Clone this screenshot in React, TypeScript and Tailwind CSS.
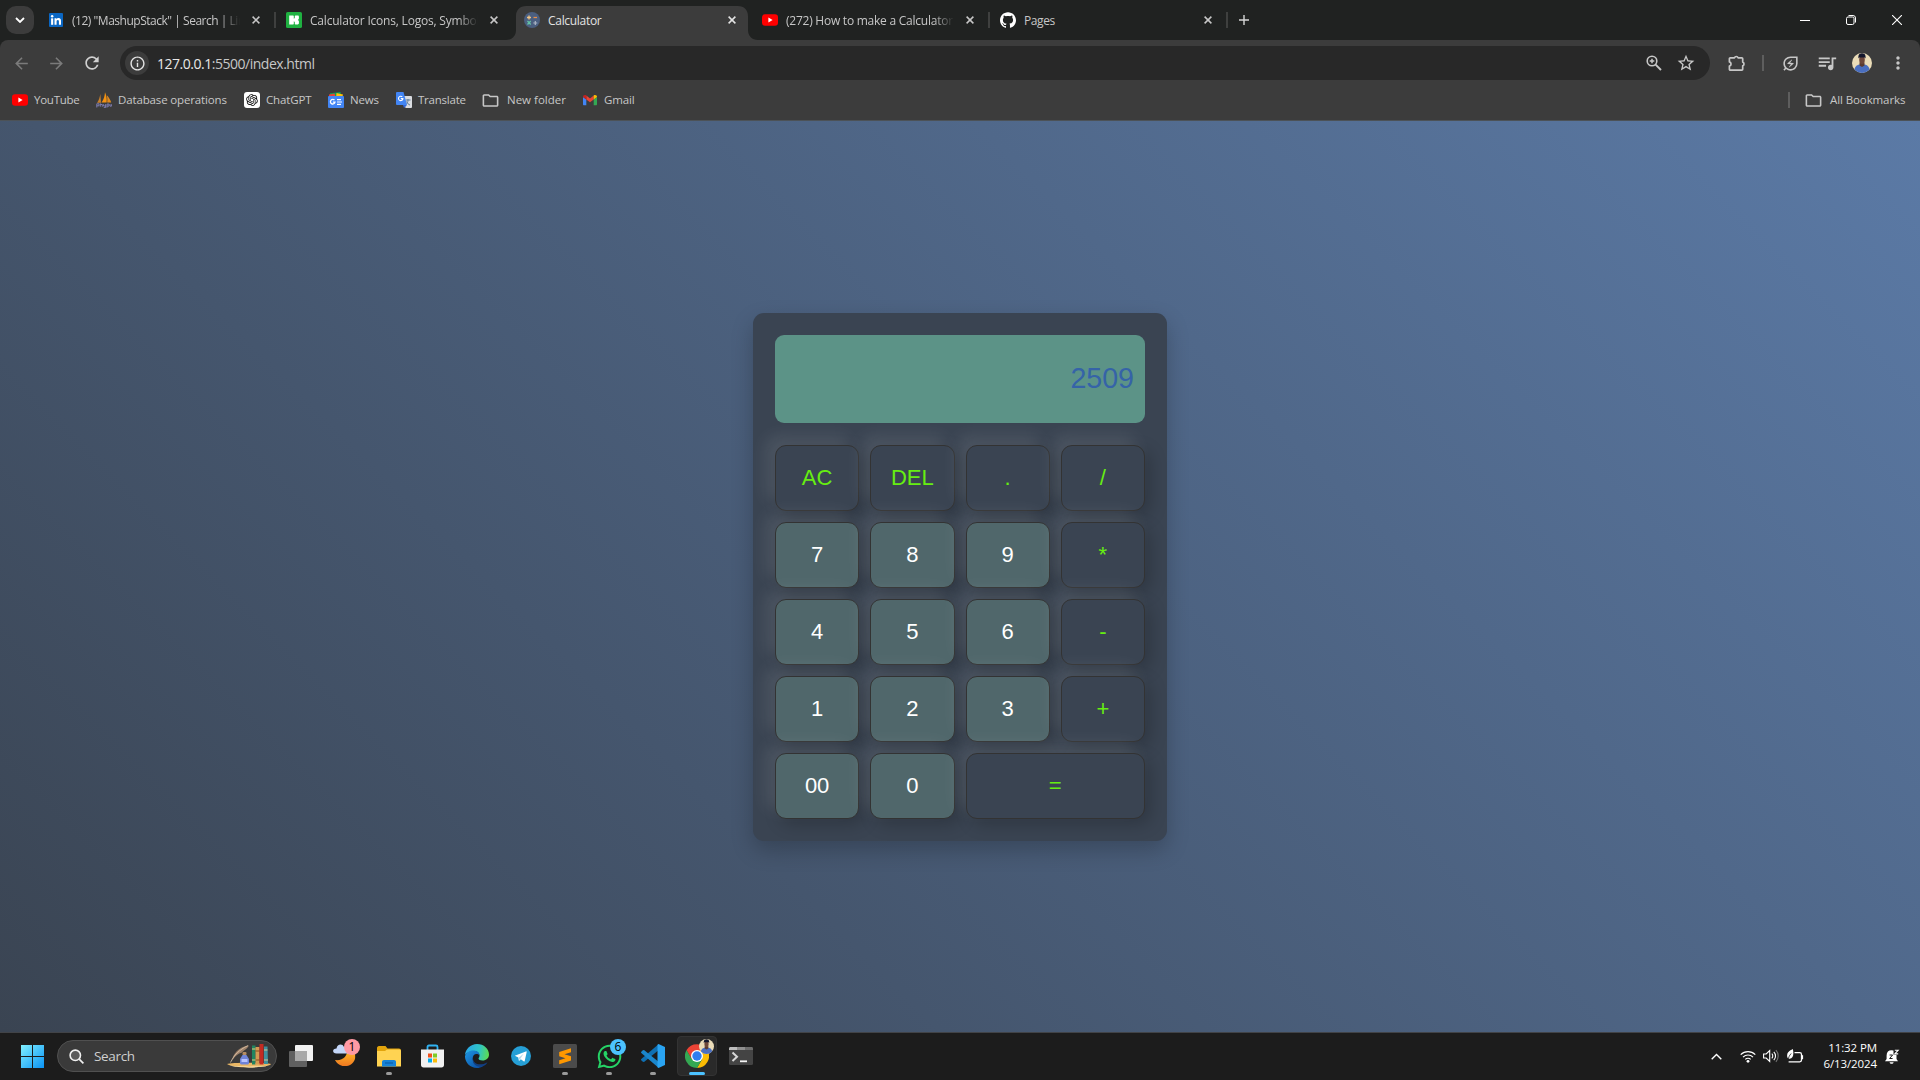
import React from "react";
import { SiGithub } from "react-icons/si";
import { RiOpenaiFill } from "react-icons/ri";
import { FaWhatsapp } from "react-icons/fa";
import {
  MdArrowBack,
  MdArrowForward,
  MdRefresh,
  MdStarBorder,
  MdOutlineEnergySavingsLeaf,
  MdQueueMusic,
  MdMoreVert,
  MdOutlineFolder,
  MdOutlineInfo,
} from "react-icons/md";

const Svg = ({ w = 16, h, vb, children }: { w?: number; h?: number; vb: string; children: React.ReactNode }) => (
  <svg width={w} height={h ?? w} viewBox={vb} fill="none" className="block shrink-0">
    {children}
  </svg>
);

const YouTube = () => (
  <Svg vb="0 0 16 16">
    <rect x="0" y="2.3" width="16" height="11.4" rx="3" fill="#f00" />
    <path d="M6.4 5.6v4.8L10.6 8z" fill="#fff" />
  </Svg>
);

const LinkedIn = () => (
  <Svg vb="0 0 16 16">
    <rect x="1" y="1" width="14" height="14" rx="1" fill="#0a66c2" />
    <rect x="3.1" y="6.3" width="2.1" height="6.5" fill="#fff" />
    <circle cx="4.15" cy="4.2" r="1.25" fill="#fff" />
    <path d="M6.5 6.3h2v.9c.4-.7 1.2-1.1 2-1.1 2 0 2.5 1.300 2.500 3.100v3.600h-2.100V9.600c0-.9-.1-1.700-1.100-1.700S8.600 8.700 8.600 9.600v3.200H6.500z" fill="#fff" />
  </Svg>
);

const Icons8 = () => (
  <Svg vb="0 0 16 16">
    <rect width="16" height="16" rx="1.600" fill="#1fb141" />
    <path d="M3.200 3.500h3.900c.4 0 .7.300.7.700v2.600l1-.8V4.200c0-.4.300-.7.700-.7h2.200c.8 0 1.200.5 1.200 1.200v1.600c0 .9-.6 1.400-1.200 1.600.7.200 1.200.8 1.200 1.700v1.700c0 .7-.5 1.200-1.200 1.200H9.500c-.4 0-.7-.3-.7-.7v-1.700l-1-.8v2.500c0 .4-.3.700-.7.700H3.200z" fill="#fff" />
  </Svg>
);

const CalcFavicon = () => (
  <Svg vb="0 0 16 16">
    <circle cx="8" cy="8" r="8" fill="#4b5f80" />
    <path d="M3 5.500h4M5 3.500v4" stroke="#f3c583" strokeWidth="1.300" />
    <path d="M9.500 5.500h3.500" stroke="#e88f4a" strokeWidth="1.300" />
    <path d="M3.500 9l3.200 3.500M6.700 9l-3.200 3.500" stroke="#63c3a5" strokeWidth="1.300" />
    <path d="M9.300 11h4M11.300 9v4" stroke="#aab4c4" strokeWidth="1.200" />
  </Svg>
);

const DbIcon = () => (
  <Svg vb="0 0 16 16">
    <path d="M1 10.800C2.800 8.500 3.900 5 4.300 2L5 10.800z" fill="#c9802c" />
    <path d="M5.500 10.500C7.700 8 8.800 4 9 .3c1.500 3 2 7 1.600 10.300z" fill="#f29111" />
    <path d="M11.200 10.500c.4-3 0-5.500-.4-7.200 2 2 3.700 4.700 4.400 7.200z" fill="#e08a1e" />
    <path d="M.8 15.500v-3.700h2.200v2H.8M4.300 11.300v3.400M4.300 12.500h2v2.200M7.600 12.200v1.800h2v-1.800M9.600 14v1.600H7.800M11 15.600v-3.500h2v2h-2M14 12.200v2h1.400v-2" stroke="#7f7fb5" strokeWidth=".95" />
  </Svg>
);

const ChatGpt = () => (
  <div className="flex size-4 shrink-0 items-center justify-center rounded-[3px] bg-white text-black">
    <RiOpenaiFill size={14} />
  </div>
);

const News = () => (
  <Svg vb="0 0 16 16">
    <path d="M2 1.200L12.500 0l1 5H2z" fill="#0c9d58" />
    <path d="M8.500 1l6.500 1.500-1 4H8z" fill="#ffc107" />
    <path d="M1 2.500l5.500-1L8 6H1z" fill="#ea4335" />
    <rect y="4" width="16" height="12" rx="1" fill="#4285f4" />
    <path d="M6.500 8.200a2.300 2.300 0 1 0 .5 2H4.900" stroke="#fff" strokeWidth="1.300" />
    <path d="M9 7.700h4M9 10h5M9 12.300h4" stroke="#fff" strokeWidth="1.200" />
  </Svg>
);

const Translate = () => (
  <Svg vb="0 0 16 16">
    <path d="M7 4h8a1 1 0 0 1 1 1v10a1 1 0 0 1-1 1H9.500z" fill="#dadce0" />
    <path d="M9.500 8h5M12 7v1c0 2-1 3.500-2 4.500M10.500 9.500c1 2 2 3 3.500 3.500" stroke="#5f7d9c" />
    <path d="M1 0h6.500L11 13H1a1 1 0 0 1-1-1V1a1 1 0 0 1 1-1z" fill="#4285f4" />
    <path d="M8 16l3-3H7z" fill="#3367d6" />
    <path d="M6.300 4.900a2.200 2.200 0 1 0 .6 1.700H4.800" stroke="#fff" strokeWidth="1.100" />
  </Svg>
);

const Gmail = () => (
  <Svg vb="0 0 16 16">
    <path d="M1 5v7.200c0 .7.400 1.100 1 1.100h2.300V7.400z" fill="#4285f4" />
    <path d="M15 5v7.200c0 .7-.4 1.100-1 1.100h-2.300V7.400z" fill="#34a853" />
    <path d="M4.300 3.600v3.900L8 10.300l3.700-2.800V3.600L8 6.400z" fill="#ea4335" />
    <path d="M1 5.100C1 3.200 3 2.600 4.300 3.600v3.900L1 5.100z" fill="#c5221f" />
    <path d="M15 5.100c0-1.900-2-2.500-3.300-1.500v3.900L15 5.100z" fill="#fbbc04" />
  </Svg>
);

const CloseX = () => (
  <Svg w={8} vb="0 0 8 8">
    <path d="M.6.6l6.800 6.800M7.400.6L.6 7.400" stroke="currentColor" strokeWidth="1.500" />
  </Svg>
);

const tabs = [
  { icon: <LinkedIn />, title: '(12) "MashupStack" | Search | Lin', fade: true, sep: false, active: false, ls: "tracking-[-0.48px]" },
  { icon: <Icons8 />, title: "Calculator Icons, Logos, Symbol", fade: true, sep: true, active: false, ls: "tracking-[-0.2px]" },
  { icon: <CalcFavicon />, title: "Calculator", fade: false, sep: false, active: true, ls: "tracking-[-0.3px]" },
  { icon: <YouTube />, title: "(272) How to make a Calculator", fade: true, sep: false, active: false, ls: "tracking-[-0.24px]" },
  { icon: <SiGithub size={16} color="#fff" />, title: "Pages", fade: false, sep: true, active: false, ls: "tracking-[-0.4px]" },
];

const TabStrip = () => (
  <div className="flex h-10 bg-[#202221] text-[#c7c7c7]">
    <div className="mt-1.5 ml-1.5 flex size-7 items-center justify-center rounded-[10px] bg-[#3c3c3c] text-white">
      <Svg w={10} h={6} vb="0 0 10 6">
        <path d="M1 1l4 4 4-4" stroke="currentColor" strokeWidth="1.800" />
      </Svg>
    </div>
    <div className="ml-1.5 flex">
      {tabs.map((t) => (
        <div key={t.title} className="relative h-10 w-[238px]">
          {t.sep && <div className="absolute top-3 -left-1 h-4 w-0.5 bg-[#3f403f]" />}
          {t.active && (
            <svg className="absolute -left-3 top-1.5" width="256" height="34" viewBox="0 0 256 34">
              <path d="M0 34h2c6 0 10-4 10-10V10C12 4 16 0 22 0h212c6 0 10 4 10 10v14c0 6 4 10 10 10h2z" fill="#3c3c3c" />
            </svg>
          )}
          <div className={`relative flex h-10 items-center pl-2 ${t.active ? "text-[#e3e3e3]" : ""}`}>
            {t.icon}
            <div
              className={`ml-2 w-[168px] pt-[2px] text-[12px] whitespace-nowrap ${t.ls} ${
                t.fade ? "[mask-image:linear-gradient(to_right,#000_88%,transparent)]" : ""
              }`}
            >
              {t.title}
            </div>
            <div className="ml-3">
              <CloseX />
            </div>
          </div>
        </div>
      ))}
      <div className="relative flex h-10 w-8 items-center pl-[9px]">
        <div className="absolute top-3 -left-1 h-4 w-0.5 bg-[#3f403f]" />
        <Svg w={10} vb="0 0 10 10">
          <path d="M5 0v10M0 5h10" stroke="#d6d6d6" strokeWidth="1.400" />
        </Svg>
      </div>
    </div>
    <div className="ml-auto flex items-center pr-[18px] text-white">
      <div className="h-px w-2.5 bg-white" />
      <div className="ml-9">
        <Svg w={10} vb="0 0 10 10">
          <rect x=".5" y="2" width="7.500" height="7.500" rx="1.500" stroke="currentColor" />
          <path d="M2.500.5H7A2.500 2.500 0 0 1 9.500 3v4.500" stroke="currentColor" />
        </Svg>
      </div>
      <div className="ml-9">
        <Svg w={10} vb="0 0 10 10">
          <path d="M0 0l10 10M10 0L0 10" stroke="currentColor" strokeWidth="1.100" />
        </Svg>
      </div>
    </div>
  </div>
);

const Avatar = ({ size }: { size: number }) => (
  <svg width={size} height={size} viewBox="0 0 20 20" className="block shrink-0 rounded-full">
    <rect width="20" height="20" fill="#eadcb8" />
    <path d="M2 20c0-6 2.500-8 5.500-8.500h5c3.500.5 5.500 3 5.500 8.500z" fill="#4a6fc0" />
    <path d="M7.500 9.500h5v3L10 14l-2.500-1.500z" fill="#5b3b31" />
    <ellipse cx="10" cy="6.800" rx="2.800" ry="4.200" fill="#6d473a" />
    <path d="M6.400 5.600C6 1 8 .3 10 .3s4 .7 3.600 5.300l-.7-1.200H7.100z" fill="#14172d" />
  </svg>
);

const ZoomGlyph = () => (
  <Svg w={16} vb="0 0 16 16">
    <circle cx="6" cy="6" r="4.800" stroke="currentColor" strokeWidth="1.600" />
    <path d="M9.600 9.600L15 15" stroke="currentColor" strokeWidth="1.900" />
    <path d="M6 3.700v4.600M3.700 6h4.600" stroke="currentColor" strokeWidth="1.500" />
  </Svg>
);

const PuzzleGlyph = () => (
  <Svg w={18} vb="0 0 18 18">
    <path
      d="M2.300 3.800h4.200a1.900 1.900 0 0 1 3.600 0h3.700a.9.900 0 0 1 .9.900v3.400a1.900 1.900 0 0 1 0 3.600v3.600a.9.900 0 0 1-.9.900H2.300a.9.900 0 0 1-.9-.9v-3.300a2.100 2.100 0 0 0 0-4.100V4.700a.9.900 0 0 1 .9-.9z"
      stroke="currentColor"
      strokeWidth="1.700"
      strokeLinejoin="round"
    />
  </Svg>
);

const Toolbar = () => (
  <div className="flex h-[46px] items-center pl-3 text-[#c7c7c7]">
    <div className="flex w-[108px] items-center gap-4">
      <MdArrowBack size={19} color="#7b7b7b" />
      <MdArrowForward size={19} color="#7b7b7b" />
      <MdRefresh size={20} color="#d0d0d0" />
    </div>
    <div className="flex h-[34px] w-[1590px] items-center rounded-full bg-[#282828] pl-[5px]">
      <div className="flex size-6 items-center justify-center rounded-full bg-[#3c3c3c] text-[#e3e3e3]">
        <MdOutlineInfo size={17} />
      </div>
      <div className="ml-[8px] text-[14px] tracking-[-0.48px] whitespace-nowrap">
        <span className="text-[#e8e8e8]">127.0.0.1</span>
        <span className="text-[#c7c7c7]">:5500/index.html</span>
      </div>
      <div className="ml-auto flex items-center gap-[14px] pr-3.5">
        <ZoomGlyph />
        <MdStarBorder size={20} />
      </div>
    </div>
    <div className="flex flex-1 items-center pl-[18px]">
      <PuzzleGlyph />
      <div className="ml-[16px] h-4 w-0.5 bg-[#5e5e5e]" />
      <MdOutlineEnergySavingsLeaf size={19} className="ml-[17px]" />
      <MdQueueMusic size={22} className="ml-4" />
      <div className="ml-[14px]">
        <Avatar size={20} />
      </div>
      <MdMoreVert size={20} className="ml-4" />
    </div>
  </div>
);

const bookmarks = [
  { icon: <YouTube />, label: "YouTube", w: "w-[84px]", ls: "tracking-[-0.25px]" },
  { icon: <DbIcon />, label: "Database operations", w: "w-[148px]", ls: "tracking-[-0.14px]" },
  { icon: <ChatGpt />, label: "ChatGPT", w: "w-[84px]", ls: "tracking-[-0.15px]" },
  { icon: <News />, label: "News", w: "w-[68px]", ls: "tracking-[-0.15px]" },
  { icon: <Translate />, label: "Translate", w: "w-[86px]", ls: "tracking-[-0.22px]" },
  { icon: <MdOutlineFolder size={19} className="-ml-px" />, label: "New folder", w: "w-[100px] gap-[7px]", ls: "tracking-[0px]" },
  { icon: <Gmail />, label: "Gmail", w: "w-[80px]", ls: "tracking-[-0.15px]" },
];

const Bookmarks = () => (
  <div className="flex h-[34px] items-center pb-[6px] pl-3 text-[11.5px] text-[#c7c7c7]">
    {bookmarks.map((b) => (
      <div key={b.label} className={`flex shrink-0 items-center gap-1.5 whitespace-nowrap ${b.w} ${b.ls}`}>
        {b.icon}
        {b.label}
      </div>
    ))}
    <div className="ml-auto h-4 w-0.5 bg-[#5e5e5e]" />
    <div className="ml-[14px] flex w-[116px] items-center gap-[7px] tracking-[-0.1px] whitespace-nowrap">
      <MdOutlineFolder size={19} />
      All Bookmarks
    </div>
  </div>
);

const keys: { k: string; op?: boolean; wide?: boolean }[] = [
  { k: "AC", op: true },
  { k: "DEL", op: true },
  { k: ".", op: true },
  { k: "/", op: true },
  { k: "7" },
  { k: "8" },
  { k: "9" },
  { k: "*", op: true },
  { k: "4" },
  { k: "5" },
  { k: "6" },
  { k: "-", op: true },
  { k: "1" },
  { k: "2" },
  { k: "3" },
  { k: "+", op: true },
  { k: "00" },
  { k: "0" },
  { k: "=", op: true, wide: true },
];

const Calculator = () => (
  <div className="w-[414px] rounded-[11px] bg-[#3a4452] p-[22px] font-['Liberation_Sans',sans-serif] shadow-[0_9px_22px_rgba(0,0,0,0.22)]">
    <div className="flex h-[88px] items-center justify-end rounded-[9px] bg-[#5c9387] pr-[11px] pb-[1px] text-[28.6px] text-[#3563a8]">
      2509
    </div>
    <div className="mt-[22px] grid grid-cols-4 gap-[11px]">
      {keys.map(({ k, op, wide }) => (
        <button
          key={k}
          className={`relative h-[66px] rounded-[11px] border border-[#333] pb-px text-[22px] shadow-[-8.8px_-8.8px_16.5px_rgba(255,255,255,0.1),5.5px_5.5px_16.5px_rgba(0,0,0,0.2)] ${
            op ? "bg-[#3a4452] text-[#66ee11]" : "bg-[#50676b] text-white"
          } ${wide ? "col-span-2" : ""}`}
        >
          {k}
        </button>
      ))}
    </div>
  </div>
);

const StartIcon = () => (
  <Svg w={23} vb="0 0 23 23">
    <defs>
      <linearGradient id="win" x1="0" y1="0" x2="23" y2="23" gradientUnits="userSpaceOnUse">
        <stop stopColor="#80f0ff" />
        <stop offset="1" stopColor="#0a93f5" />
      </linearGradient>
    </defs>
    <path d="M0 0h11v11H0zM12 0h11v11H12zM0 12h11v11H0zM12 12h11v11H12z" fill="url(#win)" />
  </Svg>
);

const SearchArt = () => (
  <Svg w={44} h={24} vb="0 0 44 24">
    <path d="M0 20c4-1.800 39-1.800 44 0-2 4-38 5-44 0z" fill="#eab765" />
    <path d="M3 21.500c8 1.500 30 1.500 38 0-6 2.500-32 2.500-38 0z" fill="#fff0c2" />
    <path d="M5 17C6 10 11 3 22 1.500c-2 4-6 5-7 7-3 1-6 2-10 8.500z" fill="#9d8068" />
    <path d="M3.500 18.500C7 11 12 6 21 1.500" stroke="#e8d2b8" strokeWidth=".7" />
    <rect x="15.500" y="8" width="4" height="3" rx="1" fill="#b58d63" />
    <path d="M15.500 11h4l2.500 4v4c0 1-1 1.500-2 1.500h-5c-1 0-2-.5-2-1.500v-4z" fill="#6f84d8" />
    <path d="M14.500 15h6v3h-6z" fill="#b7c3ff" />
    <rect x="25" y="1.500" width="3.500" height="19" fill="#218560" />
    <rect x="28.500" y="3" width="4" height="17.500" fill="#d49a52" />
    <path d="M28.500 7h4M28.500 16h4" stroke="#86501f" />
    <rect x="32.500" y="0" width="4" height="20.500" fill="#c32b22" />
    <path d="M37 2.500h3.500L41 20h-4z" fill="#408f9d" />
    <path d="M37 6h3.500M37 16h4" stroke="#d8c38d" />
    <path d="M25 5h3.500M25 16h3.500" stroke="#e3cf80" />
  </Svg>
);

const TaskView = () => (
  <Svg w={24} vb="0 0 24 24">
    <rect x="6" y="1" width="18" height="16" rx="1" fill="#f2f2f2" />
    <rect x="0" y="7" width="18" height="16" rx="1" fill="#606060" />
    <path d="M6 7h12v10H6z" fill="#a9a9a9" />
  </Svg>
);

const Weather = () => (
  <Svg w={24} vb="0 0 24 24">
    <defs>
      <linearGradient id="moon" x1="0" y1="8" x2="0" y2="23" gradientUnits="userSpaceOnUse">
        <stop stopColor="#ffb627" />
        <stop offset="1" stopColor="#ee7420" />
      </linearGradient>
    </defs>
    <path d="M2 16c8 1 13-4 12-11 7 0 9 5 8 10-2 6-7 7.500-11 7C7 22 4 19.500 2 16z" fill="url(#moon)" />
    <path d="M3.500 9.500c-4.500 0-4.500-5 0-5C4 0 9.500-1 11 3c3.500 0 5 3 4 6.500z" fill="#c3d6f8" />
  </Svg>
);

const Explorer = () => (
  <Svg w={24} vb="0 0 24 24">
    <path d="M0 4c0-1 .8-2 2-2h6.500l2 2.500H22c1 0 2 .8 2 2V12H0z" fill="#e2a40c" />
    <path d="M0 7h8l2-1.500h12.500c.8 0 1.500.7 1.500 1.500v15.500H0z" fill="#ffd352" />
    <path d="M5 22.500V18c0-1.200.8-2 2-2h10c1.200 0 2 .8 2 2v4.500z" fill="#1683d8" />
    <path d="M8 19h8" stroke="#0b5fa9" strokeWidth="1.200" />
  </Svg>
);

const Store = () => (
  <Svg w={24} vb="0 0 24 24">
    <path d="M6.500 6V3c0-1 .5-1.500 1.500-1.500h7c1 0 1.500.5 1.500 1.500v3" stroke="#2fb2f2" strokeWidth="1.800" />
    <path d="M0 5.500h23V21c0 1.500-1 2.500-2.500 2.500h-18C1 23.500 0 22.500 0 21z" fill="#f1f1f1" />
    <path d="M7 9.500h4v4H7z" fill="#f1511b" />
    <path d="M12 9.500h4v4h-4z" fill="#80cc28" />
    <path d="M7 14.500h4v4H7z" fill="#00adef" />
    <path d="M12 14.500h4v4h-4z" fill="#fbbc09" />
  </Svg>
);

const Edge = () => (
  <Svg w={24} vb="0 0 24 24">
    <defs>
      <linearGradient id="edgeTop" x1="2" y1="6" x2="24" y2="10" gradientUnits="userSpaceOnUse">
        <stop stopColor="#2aa9e4" />
        <stop offset=".55" stopColor="#2fc5c4" />
        <stop offset="1" stopColor="#5fdc4c" />
      </linearGradient>
      <linearGradient id="edgeLow" x1="0" y1="10" x2="14" y2="24" gradientUnits="userSpaceOnUse">
        <stop stopColor="#1b8fdc" />
        <stop offset="1" stopColor="#0c4fa5" />
      </linearGradient>
    </defs>
    <path d="M0 11C.5 5 5.500 0 12 0c7 0 12 5 12 10.500 0 3.500-2.700 6-6.500 6-2.500 0-4-1-4-2 0-.7 1-1.200 1-3C14.500 9 12 7 9 7c-4 0-7.500 2-9 4z" fill="url(#edgeTop)" />
    <path d="M0 12c1-3.500 5-6 9-5.500 3.500.3 5.600 2.500 5.500 5-.5-1-1.500-1.500-3-1.500-3 0-4.500 3-3.500 6.500 1 4 5 6 10 5.500-2 1.500-4 2-6 2C5 24-.3 18 0 12z" fill="url(#edgeLow)" />
    <path d="M8 14c0 6 7 8.500 14.500 4.200C21.500 20 20 21.500 18 22.300c-6 1.500-11.500-2.300-10-8.300z" fill="#123f82" />
  </Svg>
);

const Telegram = () => (
  <Svg w={20} vb="0 0 20 20">
    <circle cx="10" cy="10" r="10" fill="#269fd6" />
    <path d="M3.800 9.800l11-4.400c.6-.2 1 .1.800 1l-1.900 8.500c-.1.600-.6.800-1.100.4l-2.800-2-1.500 1.400c-.2.200-.5.200-.5-.2l-.5-3z" fill="#fff" />
    <path d="M7.700 11.700l5-4.200-3 4.800-1.700 1.700z" fill="#b5d9ed" />
  </Svg>
);

const Sublime = () => (
  <Svg w={24} vb="0 0 24 24">
    <rect width="24" height="24" rx="1.500" fill="#4b4b4b" />
    <path d="M18 4.200v4l-6.500 2 6.500 2v4.300l-11.800 3.800v-4l6.300-2-6.300-2V8z" fill="#ff9800" />
  </Svg>
);

const VsCode = () => (
  <Svg w={24} vb="0 0 24 24">
    <path d="M17.500.3v6L3 18l-1.200-.3-1.500-1.400c-.4-.4-.4-.9 0-1.300z" fill="#0f70b3" />
    <path d="M17.500 23.700v-6L3 6l-1.200.3L.3 7.700c-.4.400-.4.900 0 1.300z" fill="#1a86cc" />
    <path d="M17.500 0L24 3v18l-6.500 3-1-.8V.8z" fill="#2aa4f2" />
  </Svg>
);

const Chrome = () => (
  <Svg w={24} vb="0 0 24 24">
    <path d="M12 6h10.400A12 12 0 0 1 12 24l5.200-9z" fill="#fbbc04" />
    <path d="M6.800 15L1.600 6A12 12 0 0 0 12 24l5.200-9z" fill="#34a853" />
    <path d="M12 6.400h10.400A12 12 0 0 0 1.600 6l5.200 9z" fill="#ea4335" />
    <circle cx="12" cy="12" r="6" fill="#fff" />
    <circle cx="12" cy="12" r="4.700" fill="#2f7df0" />
  </Svg>
);

const Terminal = () => (
  <Svg w={24} vb="0 0 24 24">
    <rect y="3" width="24" height="18" rx="1.500" fill="#444" />
    <path d="M0 6V4.500C0 3.700.7 3 1.500 3H8v3z" fill="#bdbdbd" />
    <path d="M8 3h8v3H8z" fill="#8f8f8f" />
    <path d="M16 3h6.500c.8 0 1.500.7 1.500 1.500V6h-8z" fill="#6d6d6d" />
    <path d="M3.500 8.500L8 12.700l-4.500 4.200" stroke="#d8d8d8" strokeWidth="2" />
    <path d="M11 17.300h7" stroke="#f5f5f5" strokeWidth="1.800" />
  </Svg>
);

const Badge = ({ n, color }: { n: string; color: string }) => (
  <div className={`absolute flex size-4 items-center justify-center rounded-full text-[12px] leading-none text-black ${color}`}>{n}</div>
);

const apps = [
  { id: "view", icon: <TaskView /> },
  { id: "weather", icon: <Weather />, badge: <Badge n="1" color="bg-[#ff99a4] top-[6px] left-[21px]" /> },
  { id: "files", icon: <Explorer />, run: true },
  { id: "store", icon: <Store /> },
  { id: "edge", icon: <Edge /> },
  { id: "telegram", icon: <Telegram /> },
  { id: "sublime", icon: <Sublime />, run: true },
  { id: "whatsapp", icon: <FaWhatsapp size={27} color="#25d366" />, run: true, badge: <Badge n="6" color="bg-[#4cc2ff] top-[6px] left-[23px]" /> },
  { id: "code", icon: <VsCode />, run: true },
  { id: "chrome", icon: <Chrome />, active: true },
  { id: "terminal", icon: <Terminal /> },
];

const Taskbar = () => (
  <div className="flex h-12 items-center border-t border-[#414347] bg-[#1c1c1c] pb-px pl-[21px] text-white">
    <StartIcon />
    <div className="ml-[13px] flex h-8 w-[220px] items-center rounded-full border border-[#505050] bg-[#3a3a3a] pl-[11px]">
      <Svg w={15} vb="0 0 15 15">
        <circle cx="6.300" cy="6.300" r="5.200" stroke="#f0f0f0" strokeWidth="1.600" fill="#5b5b5b" />
        <path d="M10.200 10.200l4.200 4.200" stroke="#f0f0f0" strokeWidth="1.700" />
      </Svg>
      <span className="ml-[10px] text-[13.500px] tracking-[-0.33px] text-[#cfcfcf]">Search</span>
      <div className="mr-[5px] ml-auto">
        <SearchArt />
      </div>
    </div>
    <div className="ml-0.5 flex">
      {apps.map((a) => (
        <div key={a.id} className="relative flex h-[46px] w-11 items-center justify-center">
          {a.active && <div className="absolute top-[3px] left-[-2px] h-10 w-10 translate-x-1 rounded border border-[#333] bg-[#2a2a2a]" />}
          <div className="relative">{a.icon}</div>
          {a.badge}
          {a.active && (
            <div className="absolute top-[6px] left-[24px]">
              <Avatar size={15} />
            </div>
          )}
          {a.run && <div className="absolute bottom-[4px] left-[19px] h-[3px] w-1.5 rounded-full bg-[#9a9a9a]" />}
          {a.active && <div className="absolute bottom-[4px] left-[14px] h-[3px] w-4 rounded-full bg-[#4cc2ff]" />}
        </div>
      ))}
    </div>
    <div className="ml-auto flex items-center pr-[20px]">
      <Svg w={11} h={7} vb="0 0 11 7">
        <path d="M.7 6.200l4.800-4.800 4.800 4.800" stroke="#fff" strokeWidth="1.400" />
      </Svg>
      <div className="ml-[18px]">
        <Svg w={16} h={13} vb="0 0 16 13">
          <path d="M.7 4.700a10.300 10.300 0 0 1 14.600 0M3 7.100a7 7 0 0 1 10 0M5.300 9.400a3.800 3.800 0 0 1 5.400 0" stroke="#fff" strokeWidth="1.200" />
          <circle cx="8" cy="11.300" r="1.400" fill="#fff" />
        </Svg>
      </div>
      <div className="ml-[7px]">
        <Svg w={17} h={14} vb="0 0 17 14">
          <path d="M.6 5h2.600L6.700 1.600v10.800L3.200 9H.6z" stroke="#fff" strokeWidth="1.100" />
          <path d="M8.800 4.700a3.200 3.200 0 0 1 0 4.600M10.800 2.800a6 6 0 0 1 0 8.400" stroke="#fff" strokeWidth="1.100" />
          <path d="M12.900 1.200a8.500 8.500 0 0 1 0 11.600" stroke="#777" strokeWidth="1.100" />
        </Svg>
      </div>
      <div className="ml-[7px]">
        <Svg w={17} h={15} vb="0 0 17 15">
          <path d="M7.500 3.600h5.200c1 0 1.800.8 1.800 1.800v5.700c0 1-.8 1.800-1.800 1.800H1.600" stroke="#fff" strokeWidth="1.300" />
          <path d="M15.300 6.200v4" stroke="#fff" strokeWidth="1.600" />
          <path d="M5.800 0C2 2-.3 3.500.2 7.500.4 9 1.300 9.800 2.500 9.800 6.500 9.600 7 5 5.800 0z" fill="#fff" />
          <path d="M1.200 12c0-3 1-5.500 3-7.500" stroke="#1c1c1c" strokeWidth=".8" />
        </Svg>
      </div>
      <div className="ml-[7px] w-[66px] text-right text-[11.500px] leading-4 tracking-[-0.100px] whitespace-nowrap">
        <div>11:32 PM</div>
        <div>6/13/2024</div>
      </div>
      <div className="ml-[8px]">
        <Svg w={15} vb="0 0 15 15">
          <path d="M0 12.200l1.600-2.200V6.500C1.600 3 3.500 1.200 6.500 1.200c3.200 0 5 2 5 5V10l1.500 2.200zM4.600 13.200h4c-.3 2-3.700 2-4 0z" fill="#fff" />
          <path d="M4.600 6h3L4.600 9.500h3" stroke="#1c1c1c" strokeWidth="1" />
          <path d="M8.500.2H15v5.600H8.500z" fill="#1c1c1c" />
          <path d="M9.800 1.200h3.400L9.800 4.900h3.400" stroke="#fff" strokeWidth="1.100" />
        </Svg>
      </div>
    </div>
  </div>
);

export default function App() {
  return (
    <div className="flex h-[1080px] w-[1920px] flex-col overflow-hidden bg-[#202221] font-['Open_Sans','Noto_Sans',sans-serif]">
      <TabStrip />
      <div className="rounded-t-lg bg-[#3c3c3c]">
        <Toolbar />
        <Bookmarks />
      </div>
      <div className="flex flex-1 items-center justify-center border-t border-[#4c5257] bg-linear-[45deg,#3a4452,#5b7aa6]">
        <Calculator />
      </div>
      <Taskbar />
    </div>
  );
}
